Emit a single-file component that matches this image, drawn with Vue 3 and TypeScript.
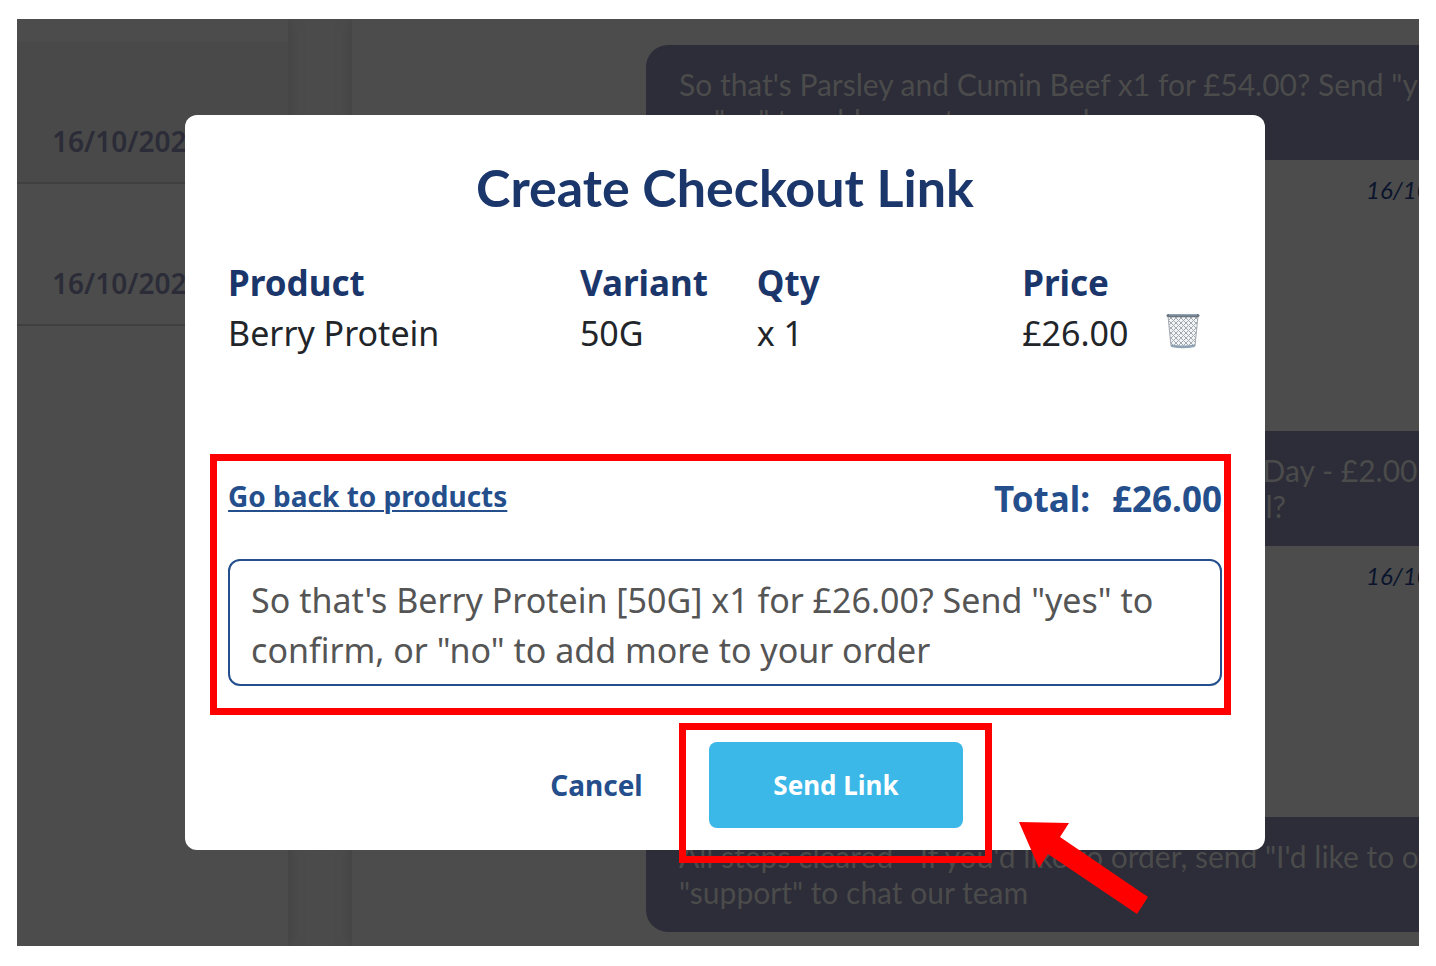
<script setup lang="ts">
import { ref } from 'vue'

interface Item {
  product: string
  variant: string
  qty: number
  price: string
}

interface Message {
  lines: string[]
  date?: string
}

const items = ref<Item[]>([
  { product: 'Berry Protein', variant: '50G', qty: 1, price: '£26.00' },
])

const total = '£26.00'

const confirmation = ref(
  'So that\'s Berry Protein [50G] x1 for £26.00? Send "yes" to confirm, or "no" to add more to your order',
)

const conversations: string[] = ['16/10/2023', '16/10/2023']

const messages: Message[] = [
  {
    lines: [
      'So that\'s Parsley and Cumin Beef x1 for £54.00? Send "yes" to confirm,',
      'or "no" to add more to your order',
    ],
    date: '16/10/2023',
  },
  {
    lines: [
      'Select a delivery option for your order: Next Day - £2.00',
      'Which of these would you like me to try at all?',
    ],
    date: '16/10/2023',
  },
  {
    lines: [
      'All steps cleared - If you\'d like to order, send "I\'d like to order" or',
      '"support" to chat our team',
    ],
  },
]

function removeItem(index: number): void {
  items.value.splice(index, 1)
}
</script>

<template>
  <div class="page">
    <div class="screen">
      <aside class="sidebar">
        <div v-for="(date, i) in conversations" :key="i" class="conversation">{{ date }}</div>
      </aside>
      <main class="chat">
        <article v-for="(message, i) in messages" :key="i" class="message">
          <div class="bubble">
            <p v-for="line in message.lines" :key="line">{{ line }}</p>
          </div>
          <time v-if="message.date" class="sent">{{ message.date }}</time>
        </article>
      </main>

      <div class="overlay">
        <section class="modal" role="dialog" aria-labelledby="modal-title">
          <h1 id="modal-title">Create Checkout Link</h1>

          <table class="items">
            <colgroup>
              <col class="col-product" />
              <col class="col-variant" />
              <col class="col-qty" />
              <col class="col-price" />
              <col />
            </colgroup>
            <thead>
              <tr>
                <th>Product</th>
                <th>Variant</th>
                <th>Qty</th>
                <th>Price</th>
                <th></th>
              </tr>
            </thead>
            <tbody>
              <tr v-for="(item, i) in items" :key="i">
                <td>{{ item.product }}</td>
                <td>{{ item.variant }}</td>
                <td>x {{ item.qty }}</td>
                <td>{{ item.price }}</td>
                <td>
                  <button class="remove" type="button" aria-label="Remove item" @click="removeItem(i)">
                    <svg width="34" height="40" viewBox="0 0 34 40" aria-hidden="true">
                      <defs>
                        <pattern id="mesh" width="5" height="5" patternUnits="userSpaceOnUse">
                          <path d="M0 0L5 5M5 0L0 5" stroke="#a3a9b0" stroke-width="1" />
                        </pattern>
                      </defs>
                      <path d="M2 3L5 33Q17 36 29 33L32 3Z" fill="#f1f3f5" />
                      <path d="M2 3L5 33Q17 36 29 33L32 3Z" fill="url(#mesh)" stroke="#a2a9b1" stroke-width="1" />
                      <path d="M5 31.500Q17 33.500 29 31.500L28.700 34Q17 36.500 5.300 34Z" fill="#8fa3b5" />
                      <rect x="0.500" y="1" width="33" height="3.200" rx="1.600" fill="#6c7680" />
                      <path d="M3 1.800H31" stroke="#9fb6c9" stroke-width="1" />
                    </svg>
                  </button>
                </td>
              </tr>
            </tbody>
          </table>

          <div class="summary">
            <div class="summary-row">
              <a class="back" href="#products">Go back to products</a>
              <div class="total"><span>Total:</span><span>{{ total }}</span></div>
            </div>
            <textarea v-model="confirmation" class="confirmation" rows="2" aria-label="Confirmation message"></textarea>
          </div>

          <div class="actions">
            <button class="cancel" type="button">Cancel</button>
            <div class="send-wrap">
              <button class="send" type="button">Send Link</button>
              <svg class="arrow" width="130" height="93" viewBox="0 0 130 93" aria-hidden="true">
                <path d="M0 0L50 1L41 15L129 75L118 92L29 32L20 46Z" fill="#ff0000" />
              </svg>
            </div>
          </div>
        </section>
      </div>
    </div>
  </div>
</template>

<style>
body {
  margin: 0;
  background: #ffffff;
}
</style>

<style scoped>
* {
  box-sizing: border-box;
}

.page {
  display: flex;
  min-height: 100vh;
  padding: 19px 17px 20px;
  font-family: "Noto Sans", "Open Sans", sans-serif;
}

.screen {
  position: relative;
  display: flex;
  flex: 1;
  min-width: 0;
  overflow: hidden;
  background: #4b4b4b;
}

.sidebar {
  flex: none;
  width: 271px;
  padding-top: 23px;
  background: #4c4c4c;
  box-shadow: 0 0 12px #404040;
}

.conversation {
  display: flex;
  align-items: flex-end;
  height: 142px;
  padding: 0 35px 21px;
  border-bottom: 2px solid #404040;
  color: #2b2c38;
  font-size: 28px;
  font-weight: 600;
  line-height: 40px;
}

.conversation:first-child {
  background: #494949;
}

.chat {
  display: flex;
  flex: 1;
  flex-direction: column;
  min-width: 0;
  margin-left: 64px;
  padding: 26px 0 0 294px;
  overflow: hidden;
  background: #4c4c4c;
  box-shadow: 0 0 12px #404040;
  font-family: Lato, sans-serif;
}

.message {
  flex: none;
  height: 386px;
}

.message:last-child {
  height: auto;
}

.bubble {
  height: 115px;
  padding: 21px 33px;
  border-radius: 22px 0 0 22px;
  background: #2c2d38;
  color: #4b4b4b;
  font-size: 30px;
  line-height: 36px;
  white-space: nowrap;
}

.bubble p {
  margin: 0;
}

.sent {
  display: block;
  padding: 12px 0 0 720px;
  color: #0a142c;
  font-size: 24px;
  font-style: italic;
  line-height: 36px;
  white-space: nowrap;
}

.overlay {
  position: absolute;
  inset: 0;
  display: flex;
  align-items: center;
  justify-content: center;
  padding-left: 14px;
}

.modal {
  width: 77.8%;
  padding: 38px 43px 22px;
  border-radius: 12px;
  background: #ffffff;
  color: #212529;
}

h1 {
  margin: 0 0 36px;
  color: #1b366b;
  font-family: Lato, sans-serif;
  font-size: 52px;
  font-weight: 700;
  line-height: 69px;
  text-align: center;
}

.items {
  width: 100%;
  border-collapse: collapse;
  table-layout: fixed;
  font-size: 34px;
  line-height: 50px;
  text-align: left;
}

.col-product {
  width: 35.4%;
}

.col-variant {
  width: 17.8%;
}

.col-qty {
  width: 26.7%;
}

.col-price {
  width: 14.5%;
}

.items th,
.items td {
  height: 50px;
  padding: 0;
  white-space: nowrap;
}

.items th {
  color: #1b366b;
  font-size: 35px;
  font-weight: 700;
}

.remove {
  display: block;
  padding: 0;
  border: 0;
  background: none;
  cursor: pointer;
}

.remove svg {
  display: block;
}

.summary {
  position: relative;
  margin-top: 116px;
}

.summary::after {
  position: absolute;
  inset: -20px -9px -29px -18px;
  border: 7px solid #ff0000;
  content: "";
  pointer-events: none;
}

.summary-row {
  display: flex;
  align-items: flex-start;
  justify-content: space-between;
  height: 50px;
  margin-bottom: 35px;
  color: #244f8c;
  font-weight: 700;
}

.back {
  color: inherit;
  font-size: 28px;
  line-height: 44px;
  text-decoration-thickness: 2px;
  text-underline-offset: 3px;
}

.total {
  display: flex;
  gap: 22px;
  font-size: 35px;
  line-height: 50px;
}

.confirmation {
  display: block;
  width: 100%;
  height: 127px;
  padding: 14px 21px 9px;
  overflow: hidden;
  border: 2px solid #244f8c;
  border-radius: 12px;
  background: #ffffff;
  color: #555555;
  font: inherit;
  font-size: 34px;
  line-height: 50px;
  resize: none;
}

.actions {
  display: flex;
  justify-content: center;
  gap: 3px;
  margin-top: 56px;
}

.cancel,
.send {
  height: 86px;
  padding: 0;
  border: 0;
  border-radius: 8px;
  background: none;
  font-family: inherit;
  font-weight: 700;
  cursor: pointer;
}

.cancel {
  width: 219px;
  color: #244f8c;
  font-size: 28px;
}

.send-wrap {
  position: relative;
}

.send-wrap::after {
  position: absolute;
  inset: -19px -29px -35px -30px;
  border: 7px solid #ff0000;
  content: "";
  pointer-events: none;
}

.send {
  display: block;
  width: 254px;
  background: #3bb8e8;
  color: #ffffff;
  font-size: 26px;
}

.arrow {
  position: absolute;
  top: 80px;
  left: 310px;
}
</style>
